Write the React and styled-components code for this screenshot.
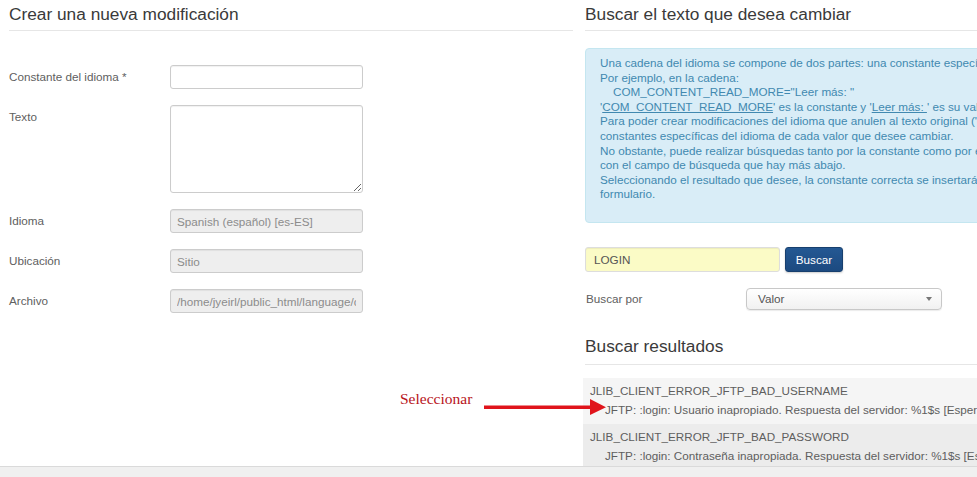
import React from 'react';
import styled, { createGlobalStyle } from 'styled-components';

const GlobalStyle = createGlobalStyle`
  html, body {
    margin: 0;
    padding: 0;
    background: #fff;
    overflow: hidden;
  }
  body {
    font-family: "Liberation Sans", Arial, sans-serif;
    font-size: 11.7px;
    color: #555;
  }
`;

const Page = styled.div`
  position: relative;
  display: flex;
  gap: 12px;
  padding-left: 9px;
  width: 1200px;
  height: 477px;
`;

const Column = styled.section`
  width: ${props => props.$width}px;
  flex-shrink: 0;
`;

const Heading = styled.h2`
  margin: ${props => props.$mt || 0}px 0 0;
  padding: ${props => props.$pt}px 0 ${props => props.$pb}px;
  font-size: 17.3px;
  font-weight: normal;
  line-height: 20px;
  color: #3a3a3a;
  border-bottom: 1px solid #e6e6e6;
`;

const Form = styled.div`
  margin-top: 34px;
  display: grid;
  grid-template-columns: 161px 193px;
  row-gap: 16px;
`;

const Label = styled.label`
  padding-top: 3px;
  line-height: 18px;
  color: #606060;
`;

const Input = styled.input`
  box-sizing: border-box;
  width: 100%;
  height: 24px;
  margin: 0;
  padding: 0 6px;
  border: 1px solid #ccc;
  border-radius: 3px;
  box-shadow: inset 0 1px 1px rgba(0, 0, 0, 0.06);
  font: 11.7px "Liberation Sans", Arial, sans-serif;
  color: #555;
  background: #fff;

  &:disabled {
    background: #eee;
    color: #8c8c8c;
  }
`;

const TextArea = styled.textarea`
  box-sizing: border-box;
  width: 100%;
  height: 88px;
  margin: 0;
  padding: 4px 6px;
  border: 1px solid #ccc;
  border-radius: 3px;
  box-shadow: inset 0 1px 1px rgba(0, 0, 0, 0.06);
  resize: vertical;
  font: 11.7px "Liberation Sans", Arial, sans-serif;
`;

const InfoBox = styled.div`
  margin-top: 17px;
  padding: 7px 14px 20px;
  background: #d9edf7;
  border: 1px solid #c4e6f0;
  border-radius: 4px;
  color: #4189b0;
  line-height: 14.6px;
  white-space: nowrap;

  u {
    text-decoration: underline;
  }
`;

const SearchRow = styled.div`
  margin-top: 24px;
  display: flex;
  gap: 5px;
`;

const SearchInput = styled(Input)`
  width: 195px;
  height: 25px;
  background: #fbfbc6;
  border-color: #ddd;
  padding-left: 8px;
`;

const Button = styled.button`
  width: 58px;
  height: 25px;
  border: 1px solid #173f6e;
  border-radius: 3px;
  background: linear-gradient(#245893, #1c4a80);
  color: #fff;
  font: 11.7px "Liberation Sans", Arial, sans-serif;
  box-shadow: 0 1px 2px rgba(0, 0, 0, 0.2);
`;

const FilterRow = styled.div`
  margin-top: 16px;
  display: flex;
  align-items: center;
`;

const FilterLabel = styled.span`
  width: 160px;
  padding-left: 1px;
  color: #606060;
`;

const Select = styled.div`
  box-sizing: border-box;
  width: 196px;
  height: 22px;
  display: flex;
  align-items: center;
  justify-content: space-between;
  padding: 0 9px 0 11px;
  border: 1px solid #c8c8c8;
  border-radius: 4px;
  background: linear-gradient(#fff, #f1f1f1);
  box-shadow: 0 1px 1px rgba(0, 0, 0, 0.08);
  color: #555;
`;

const Caret = styled.span`
  width: 0;
  height: 0;
  border-left: 3.5px solid transparent;
  border-right: 3.5px solid transparent;
  border-top: 4px solid #777;
`;

const ResultList = styled.div`
  margin-top: 13px;
  margin-left: -2px;
`;

const Result = styled.div`
  padding: 4px 0 4px 7px;
  background: ${props => (props.$active ? '#ececec' : '#f5f5f5')};
  white-space: nowrap;
  color: #5e5e5e;
`;

const ResultKey = styled.div`
  line-height: 18px;
`;

const ResultValue = styled.div`
  padding-left: 15px;
  line-height: ${props => props.$lh || 20}px;
  color: ${props => (props.$faded ? '#aaa' : 'inherit')};
`;

const Note = styled.span`
  position: absolute;
  left: 400px;
  top: 390px;
  font-family: "Liberation Serif", "Times New Roman", serif;
  font-size: 15.5px;
  color: #b8141b;
`;

const Arrow = styled.svg`
  position: absolute;
  left: 484px;
  top: 398px;
`;

const BottomBar = styled.div`
  position: fixed;
  left: 0;
  right: 0;
  bottom: 0;
  height: 10px;
  background: #f0f0f0;
  border-top: 1px solid #dadada;
`;

const App = () => (
  <>
    <GlobalStyle />
    <Page>
      <Column $width={564}>
        <Heading $pt={4} $pb={6}>Crear una nueva modificación</Heading>
        <Form>
          <Label>Constante del idioma *</Label>
          <Input type="text" />
          <Label>Texto</Label>
          <TextArea />
          <Label>Idioma</Label>
          <Input disabled defaultValue="Spanish (español) [es-ES]" />
          <Label>Ubicación</Label>
          <Input disabled defaultValue="Sitio" />
          <Label>Archivo</Label>
          <Input disabled defaultValue="/home/jyeirl/public_html/language/overrides/es-ES.override.ini" />
        </Form>
      </Column>

      <Column $width={580}>
        <Heading $pt={4} $pb={6}>Buscar el texto que desea cambiar</Heading>
        <InfoBox>
          Una cadena del idioma se compone de dos partes: una constante específica y su valor.<br />
          Por ejemplo, en la cadena:<br />
          &nbsp;&nbsp;&nbsp;&nbsp;COM_CONTENT_READ_MORE="Leer más: "<br />
          '<u>COM_CONTENT_READ_MORE</u>' es la constante y '<u>Leer más: </u>' es su valor.<br />
          Para poder crear modificaciones del idioma que anulen al texto original ('override'), tiene que usar las<br />
          constantes específicas del idioma de cada valor que desee cambiar.<br />
          No obstante, puede realizar búsquedas tanto por la constante como por el valor que desee cambiar<br />
          con el campo de búsqueda que hay más abajo.<br />
          Seleccionando el resultado que desee, la constante correcta se insertará automáticamente en el<br />
          formulario.
        </InfoBox>

        <SearchRow>
          <SearchInput defaultValue="LOGIN" />
          <Button>Buscar</Button>
        </SearchRow>

        <FilterRow>
          <FilterLabel>Buscar por</FilterLabel>
          <Select>
            Valor
            <Caret />
          </Select>
        </FilterRow>

        <Heading $mt={26} $pt={0} $pb={8}>Buscar resultados</Heading>
        <ResultList>
          <Result>
            <ResultKey>JLIB_CLIENT_ERROR_JFTP_BAD_USERNAME</ResultKey>
            <ResultValue>JFTP: :login: Usuario inapropiado. Respuesta del servidor: %1$s [Esperado: 331]. Ruta enviada: %2$s</ResultValue>
          </Result>
          <Result $active>
            <ResultKey>JLIB_CLIENT_ERROR_JFTP_BAD_PASSWORD</ResultKey>
            <ResultValue>JFTP: :login: Contraseña inapropiada. Respuesta del servidor: %1$s [Esperado: 230]. Contraseña</ResultValue>
            <ResultValue $lh={12} $faded>enviado: %2$s</ResultValue>
          </Result>
        </ResultList>
      </Column>

      <Note>Seleccionar</Note>
      <Arrow width="124" height="18" viewBox="0 0 124 18">
        <rect x="0" y="7.5" width="108" height="3.5" fill="#e0141b" />
        <polygon points="106,1 122,9.2 106,17" fill="#e0141b" />
      </Arrow>
    </Page>
    <BottomBar />
  </>
);

export default App;
